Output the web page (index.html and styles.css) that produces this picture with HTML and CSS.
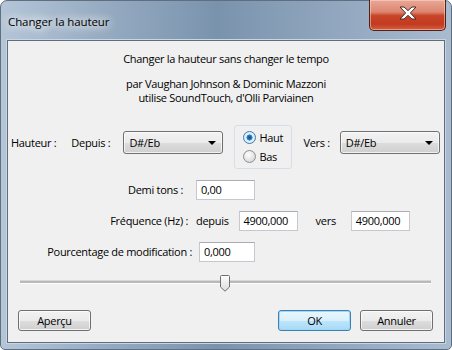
FILE: index.html
```html
<!DOCTYPE html>
<html lang="fr">
<head>
    <meta charset="UTF-8">
    <title>Changer la hauteur</title>
    <link rel="stylesheet" href="styles.css">
</head>
<body>

<div class="window">
    <div class="titlebar">
        <span class="title">Changer la hauteur</span>
        <button class="close" title="Fermer">
            <svg width="20" height="14" viewBox="0 0 20 14">
                <path d="M2 1 L6 1 L10 4.6 L14 1 L18 1 L12.4 7 L18 13 L14 13 L10 9.4 L6 13 L2 13 L7.6 7 Z" fill="#fff" stroke="#4b2b24" stroke-width="1" stroke-linejoin="round"/>
            </svg>
        </button>
    </div>

    <div class="client">
        <p class="intro">Changer la hauteur sans changer le tempo</p>
        <p class="credits">par Vaughan Johnson &amp; Dominic Mazzoni<br>utilise SoundTouch, d'Olli Parviainen</p>

        <div class="pitch-row">
            <span class="lbl lbl-hauteur">Hauteur :</span>
            <span class="lbl lbl-depuis">Depuis :</span>
            <div class="combo combo-from"><span>D#/Eb</span><i class="arrow"></i></div>
            <div class="direction">
                <label class="radio checked"><i class="dot"></i>Haut</label>
                <label class="radio"><i class="dot"></i>Bas</label>
            </div>
            <span class="lbl lbl-vers">Vers :</span>
            <div class="combo combo-to"><span>D#/Eb</span><i class="arrow"></i></div>
        </div>

        <div class="field-row row-semi">
            <span class="field-label">Demi tons :</span>
            <div class="edit">0,00</div>
        </div>
        <div class="field-row row-freq">
            <span class="field-label">Fréquence (Hz) :</span>
            <span class="word">depuis</span>
            <div class="edit">4900,000</div>
            <span class="word word-vers">vers</span>
            <div class="edit">4900,000</div>
        </div>
        <div class="field-row row-pct">
            <span class="field-label">Pourcentage de modification :</span>
            <div class="edit">0,000</div>
        </div>

        <div class="slider">
            <div class="track"></div>
            <svg class="thumb" width="12" height="17" viewBox="0 0 12 17">
                <defs>
                    <linearGradient id="tg" x1="0" y1="0" x2="0" y2="1">
                        <stop offset="0" stop-color="#fdfdfd"/>
                        <stop offset="1" stop-color="#dcdcdc"/>
                    </linearGradient>
                </defs>
                <path d="M1.5 1.5 Q1.5 0.5 2.5 0.5 L9.5 0.5 Q10.5 0.5 10.5 1.5 L10.5 12 L6 16.2 L1.5 12 Z" fill="url(#tg)" stroke="#707070" stroke-width="1"/>
            </svg>
        </div>

        <div class="buttons">
            <button class="btn">Aperçu</button>
            <span class="spacer"></span>
            <button class="btn btn-default">OK</button>
            <button class="btn">Annuler</button>
        </div>
    </div>
</div>

</body>
</html>
```

FILE: styles.css
```css
html, body {
    margin: 0;
    padding: 0;
}
body {
    width: 452px;
    height: 350px;
    background-color: #fff;
    font-family: "Open Sans", "Noto Sans", Arial, sans-serif;
    font-size: 11px;
    letter-spacing: -0.3px;
    color: #000;
    overflow: hidden;
}
.window {
    box-sizing: border-box;
    width: 452px;
    height: 350px;
    border: 1px solid #5f6f80;
    border-radius: 7px 7px 5px 5px;
    background: linear-gradient(to right, #b4c5d7 0%, #93a9c0 25%, #7a93ad 48%, #8fa5bd 72%, #a9bbcf 100%);
    display: flex;
    flex-direction: column;
    padding: 0 6px 6px 6px;
}
.titlebar {
    height: 39px;
    display: flex;
    align-items: flex-start;
}
.title {
    margin-top: 13px;
    margin-left: 1px;
    font-size: 11.5px;
    letter-spacing: -0.1px;
    color: #000;
    text-shadow: 0 0 8px #fff, 0 0 12px #fff, 0 0 16px #e8eef5;
}
.close {
    margin-left: auto;
    margin-top: -1px;
    margin-right: -1px;
    width: 77px;
    height: 31px;
    border: 1px solid #4c2219;
    border-top: none;
    border-radius: 0 0 5px 5px;
    background: linear-gradient(to bottom, #e9a797 0%, #dc8670 40%, #c9452a 52%, #c23a1f 80%, #d65e3e 100%);
    box-shadow: inset 0 0 0 1px rgba(255, 220, 210, 0.5);
    display: flex;
    align-items: flex-start;
    justify-content: center;
    padding: 6px 0 0 0;
    cursor: pointer;
}
.client {
    flex: 1;
    background-color: #f0f0f0;
    border: 1px solid #5d6d7e;
    box-shadow: 0 0 0 1px #c9d5e2;
    display: flex;
    flex-direction: column;
}
.intro {
    margin: 10px 0 0 0;
    text-align: center;
    line-height: 15px;
}
.credits {
    margin: 11px 0 0 0;
    text-align: center;
    line-height: 14px;
}
.pitch-row {
    display: flex;
    align-items: center;
    margin-top: 16px;
    height: 47px;
}
.lbl {
    white-space: nowrap;
    flex-shrink: 0;
    padding-bottom: 4px;
}
.lbl-hauteur {
    margin-left: 3px;
}
.lbl-depuis {
    margin-left: 15px;
}
.combo {
    box-sizing: border-box;
    flex-shrink: 0;
    width: 100px;
    height: 23px;
    border: 1px solid #707070;
    border-radius: 3px;
    background: linear-gradient(to bottom, #f2f2f2 0%, #ebebeb 50%, #dddddd 51%, #cfcfcf 100%);
    box-shadow: inset 0 0 0 1px rgba(255, 255, 255, 0.7);
    display: flex;
    align-items: center;
    padding: 0 6px 0 5px;
    margin-bottom: 4px;
}
.combo span {
    flex: 1;
}
.arrow {
    width: 0;
    height: 0;
    border-left: 4px solid transparent;
    border-right: 4px solid transparent;
    border-top: 4px solid #000;
}
.combo-from {
    margin-left: 13px;
}
.direction {
    box-sizing: border-box;
    flex-shrink: 0;
    width: 58px;
    height: 44px;
    margin-left: 11px;
    margin-top: 4px;
    border: 1px solid #d5dfe5;
    border-radius: 3px;
    display: flex;
    flex-direction: column;
    justify-content: center;
    gap: 5px;
    padding-left: 8px;
}
.radio {
    display: flex;
    align-items: center;
    height: 14px;
}
.dot {
    box-sizing: border-box;
    width: 13px;
    height: 13px;
    border: 1px solid #8e8f8f;
    border-radius: 50%;
    background: radial-gradient(circle at 40% 35%, #ffffff 0%, #e6e6e6 50%, #c8c8c8 100%);
    margin-right: 3px;
}
.radio.checked .dot {
    border-color: #3d7bad;
    background: radial-gradient(circle at 50% 50%, #0c4f8e 0%, #1f72b8 25%, #4da2dc 38%, #eaf3fa 42%, #cfe3f2 100%);
}
.lbl-vers {
    margin-left: 11px;
}
.combo-to {
    margin-left: 10px;
}
.field-row {
    display: flex;
    align-items: center;
    height: 20px;
}
.field-label {
    width: 175px;
    text-align: right;
    white-space: nowrap;
    padding-bottom: 1px;
}
.edit {
    box-sizing: border-box;
    height: 20px;
    width: 59px;
    background-color: #fff;
    border: 1px solid #c5c8cf;
    border-top-color: #abadb3;
    display: flex;
    align-items: center;
    padding: 0 4px 1px 4px;
}
.row-semi {
    margin-top: 12px;
}
.row-semi .edit {
    margin-left: 13px;
}
.row-freq {
    margin-top: 11px;
}
.row-freq .field-label {
    width: 180px;
}
.word {
    margin-left: 8px;
    margin-right: 10px;
    padding-bottom: 1px;
}
.word-vers {
    margin-left: 18px;
    margin-right: 15px;
}
.row-pct {
    margin-top: 11px;
}
.row-pct .field-label {
    width: 184px;
}
.row-pct .edit {
    margin-left: 7px;
    width: 56px;
}
.slider {
    position: relative;
    height: 17px;
    margin: 13px 13px 0 12px;
    display: flex;
    align-items: center;
}
.track {
    flex: 1;
    height: 2px;
    background-color: #b9b9b9;
    border-bottom: 1px solid #fdfdfd;
    border-top: 1px solid #d6d6d6;
    margin-bottom: 4px;
}
.thumb {
    position: absolute;
    left: 199px;
    top: 0;
}
.buttons {
    display: flex;
    align-items: center;
    margin: 18px 11px 0 10px;
}
.spacer {
    flex: 1;
}
.btn {
    box-sizing: border-box;
    width: 73px;
    height: 21px;
    border: 1px solid #707070;
    border-radius: 3px;
    background: linear-gradient(to bottom, #f2f2f2 0%, #ebebeb 50%, #dddddd 51%, #cfcfcf 100%);
    box-shadow: inset 0 0 0 1px rgba(255, 255, 255, 0.7);
    font-family: "Open Sans", "Noto Sans", Arial, sans-serif;
    font-size: 11px;
    letter-spacing: -0.3px;
    color: #000;
    padding: 0 0 1px 0;
    margin-left: 9px;
    cursor: pointer;
}
.btn:first-child {
    margin-left: 0;
}
.btn-default {
    border-color: #3c7fb1;
    background: linear-gradient(to bottom, #eaf6fd 0%, #d9f0fc 50%, #bee6fd 51%, #a7d9f5 100%);
    box-shadow: inset 0 0 0 1px #9fd8f8;
}
```
